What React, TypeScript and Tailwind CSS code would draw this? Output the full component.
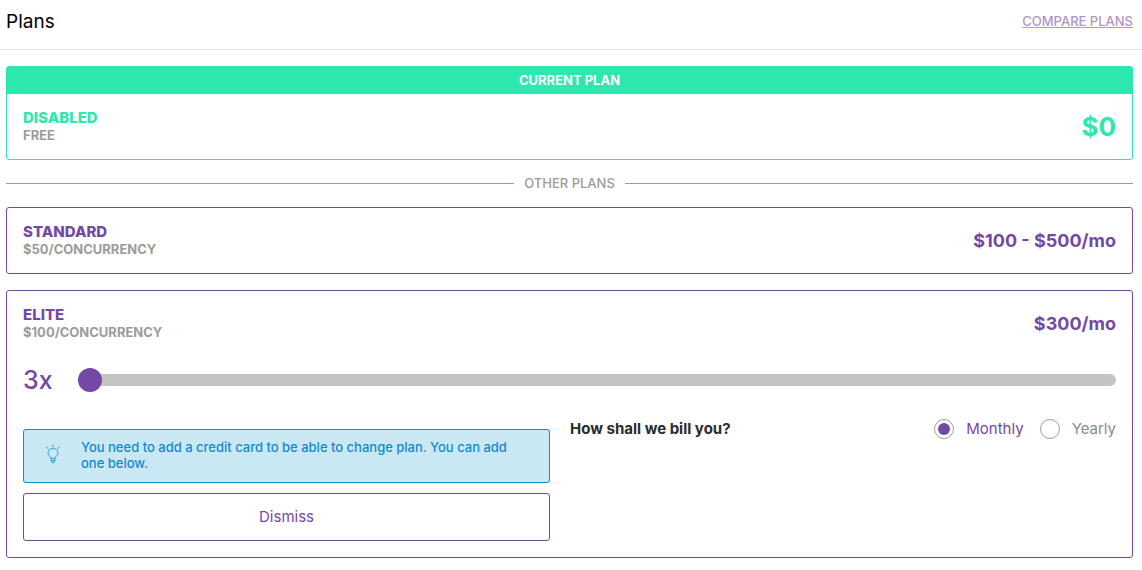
import { useState } from "react";

function PlanHeading({ name, detail, price, tone, priceSize }: {
  name: string;
  detail: string;
  price: string;
  tone: string;
  priceSize: string;
}) {
  return (
    <div className="flex items-center justify-between">
      <div>
        <h2 className={`text-[15px] leading-[18px] font-extrabold uppercase ${tone}`}>{name}</h2>
        <p className="text-[13px] leading-[17px] font-bold text-[#9b9b9b] uppercase">{detail}</p>
      </div>
      <p className={`font-bold ${tone} ${priceSize}`}>{price}</p>
    </div>
  );
}

function BulbIcon() {
  return (
    <svg
      viewBox="0 0 16 20"
      className="mt-[5px] h-5 w-4 shrink-0"
      fill="none"
      stroke="#2ba6de"
      strokeWidth="1"
      strokeLinecap="round"
      aria-hidden="true"
    >
      <path d="M8 .8v2M1.300 3l1.900 1.500M14.700 3l-1.900 1.500" />
      <path d="M6 14c0-1.600-3-2.200-3-4.900a5 4.800 0 0 1 10 0c0 2.700-3 3.300-3 4.900z" />
      <path d="M6 14v2.400c0 .9 1 2.700 2 2.700s2-1.800 2-2.700v-2.400M6.200 16.400h3.600M7.500 18h1" />
    </svg>
  );
}

const cycles = ["Monthly", "Yearly"];

export default function App() {
  const [quantity, setQuantity] = useState(3);
  const [cycle, setCycle] = useState("Monthly");

  return (
    <div className="bg-white font-['Inter','Liberation_Sans',sans-serif]">
      <header className="flex items-center justify-between border-b border-[#e6e6e6] pt-px pr-[9px] pb-[6px] pl-[6px]">
        <h1 className="text-[19px] leading-[42px] text-black">Plans</h1>
        <a href="#compare" className="text-[13px] font-medium text-[#b094cb] uppercase underline">
          Compare plans
        </a>
      </header>

      <main className="pt-4 pr-[9px] pb-3 pl-[6px]">
        <section className="rounded-[3px] border border-[#2de8ae] bg-[#2de8ae]">
          <p className="pb-px text-center text-[13px] leading-[26px] font-bold text-white uppercase">
            Current plan
          </p>
          <div className="rounded-b-[2px] bg-white px-4 py-[15px]">
            <PlanHeading name="Disabled" detail="Free" price="$0" tone="text-[#2de8ae]" priceSize="text-[26px] leading-8" />
          </div>
        </section>

        <div className="flex h-[47px] items-center gap-[10px]">
          <span className="h-px grow bg-[#9b9b9b]" />
          <h2 className="text-[13px] font-medium text-[#9b9b9b] uppercase">Other plans</h2>
          <span className="h-px grow bg-[#9b9b9b]" />
        </div>

        <section className="rounded-[3px] border border-[#7448a5] px-4 py-[15px]">
          <PlanHeading name="Standard" detail="$50/concurrency" price="$100 - $500/mo" tone="text-[#7448a5]" priceSize="text-[18px] leading-8" />
        </section>

        <section className="mt-4 rounded-[3px] border border-[#7448a5] px-4 pt-[15px] pb-4">
          <PlanHeading name="Elite" detail="$100/concurrency" price={`$${quantity * 100}/mo`} tone="text-[#7448a5]" priceSize="text-[18px] leading-8" />

          <div className="mt-[21px] flex h-9 items-center">
            <label htmlFor="quantity" className="w-[55px] text-[25px] leading-9 font-medium text-[#7448a5]">
              {quantity}x
            </label>
            <input
              id="quantity"
              type="range"
              min={3}
              max={20}
              value={quantity}
              onChange={(e) => setQuantity(Number(e.target.value))}
              className="h-3 min-w-0 grow cursor-pointer appearance-none rounded-full bg-[#c4c4c4] [&::-webkit-slider-thumb]:size-6 [&::-webkit-slider-thumb]:appearance-none [&::-webkit-slider-thumb]:rounded-full [&::-webkit-slider-thumb]:bg-[#7448a5]"
            />
          </div>

          <div className="mt-[21px] grid grid-cols-[527fr_546fr] gap-5">
            <div className="pt-[10px]">
              <div className="flex items-start gap-5 rounded-[3px] border border-[#0093d3] bg-[#cae8f4] pt-[9px] pr-6 pb-[11px] pl-[21px]">
                <BulbIcon />
                <p className="text-[13px] leading-4 font-medium text-[#118bd0]">
                  You need to add a credit card to be able to change plan. You can add one below.
                </p>
              </div>
              <button
                type="button"
                className="mt-[10px] h-12 w-full rounded-[3px] border border-[#7448a5] bg-white text-[15px] text-[#7448a5]"
              >
                Dismiss
              </button>
            </div>

            <div
              role="radiogroup"
              aria-labelledby="billing"
              className="flex h-5 items-center justify-between"
            >
              <h3 id="billing" className="text-[15px] font-bold text-[#2b2b2b]">
                How shall we bill you?
              </h3>
              <div className="flex items-center gap-4">
                {cycles.map((item) => (
                  <label
                    key={item}
                    className="flex items-center gap-3 text-[15px] text-[#8c8c8c] has-checked:text-[#7448a5]"
                  >
                    <input
                      type="radio"
                      name="cycle"
                      checked={cycle === item}
                      onChange={() => setCycle(item)}
                      className="size-5 appearance-none rounded-full border border-[#9b9b9b] bg-white p-[3px] checked:bg-[#7448a5] checked:bg-clip-content"
                    />
                    {item}
                  </label>
                ))}
              </div>
            </div>
          </div>
        </section>
      </main>
    </div>
  );
}
